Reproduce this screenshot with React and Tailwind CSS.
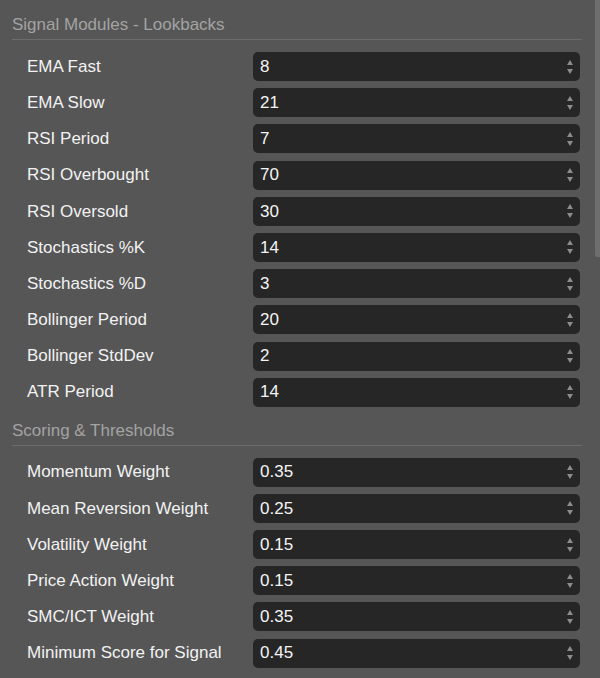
import React from 'react';

const lookbacks = [
  ['EMA Fast', '8'],
  ['EMA Slow', '21'],
  ['RSI Period', '7'],
  ['RSI Overbought', '70'],
  ['RSI Oversold', '30'],
  ['Stochastics %K', '14'],
  ['Stochastics %D', '3'],
  ['Bollinger Period', '20'],
  ['Bollinger StdDev', '2'],
  ['ATR Period', '14'],
];

const scoring = [
  ['Momentum Weight', '0.35'],
  ['Mean Reversion Weight', '0.25'],
  ['Volatility Weight', '0.15'],
  ['Price Action Weight', '0.15'],
  ['SMC/ICT Weight', '0.35'],
  ['Minimum Score for Signal', '0.45'],
];

function Spinner() {
  return (
    <div className="flex flex-col items-center gap-[4px] mr-[7px]">
      <div className="w-0 h-0 border-l-[3.5px] border-r-[3.5px] border-b-[5px] border-l-transparent border-r-transparent border-b-[#8c8c8c]" />
      <div className="w-0 h-0 border-l-[3.5px] border-r-[3.5px] border-t-[5px] border-l-transparent border-r-transparent border-t-[#8c8c8c]" />
    </div>
  );
}

function Row({ label, value }) {
  return (
    <div className="flex items-center h-[29px]">
      <div className="w-[226px] text-[17px] text-[#f2f2f2]">{label}</div>
      <div className="flex-1 h-full flex items-center justify-between bg-[#262626] rounded-[5px] pl-[7px]">
        <span className="text-[17px] text-[#f4f4f4]">{value}</span>
        <Spinner />
      </div>
    </div>
  );
}

function Section({ title, rows, first }) {
  return (
    <div>
      <div className={`${first ? 'pt-[15px]' : 'pt-[14px]'} pb-[4px] border-b border-[#6c6c6c] text-[17px] leading-5 text-[#a3a3a3]`}>
        {title}
      </div>
      <div className="pt-[12px] pl-[15px] pr-[2px] flex flex-col gap-[7.2px]">
        {rows.map(([l, v]) => <Row key={l} label={l} value={v} />)}
      </div>
    </div>
  );
}

export default function App() {
  return (
    <div className="relative w-[600px] h-[678px] overflow-hidden bg-[#565656]" style={{ fontFamily: '"Liberation Sans", Arial, sans-serif' }}>
      <div className="pl-3 pr-[18px]">
        <Section title="Signal Modules - Lookbacks" rows={lookbacks} first />
        <Section title="Scoring & Thresholds" rows={scoring} />
      </div>
      {/* scrollbar thumb */}
      <div className="absolute top-0 right-0 w-[5px] h-[257px] bg-[#6e6e6e] rounded-bl-[3px]" />
    </div>
  );
}
